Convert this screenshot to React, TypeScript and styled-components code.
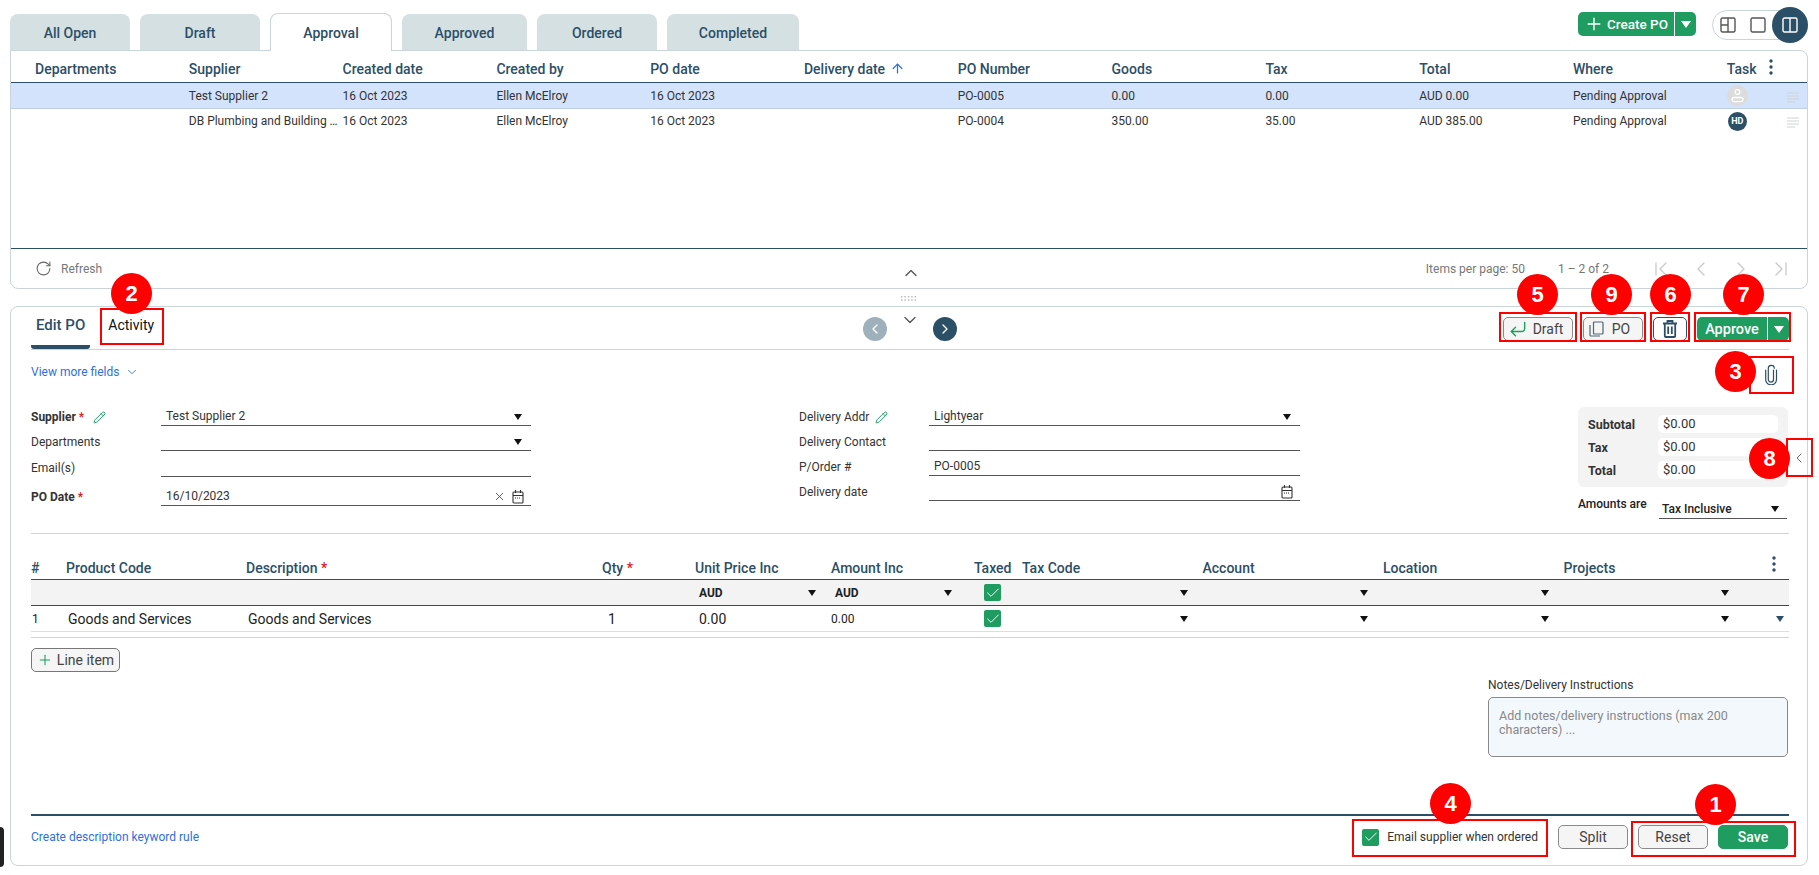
import React from 'react';
import styled, { createGlobalStyle } from 'styled-components';
import {
  ArrowUp, ChevronDown, ChevronFirst, ChevronLast, ChevronLeft, ChevronRight, ChevronUp,
  Check, CornerDownLeft, Pencil, Plus, RotateCw, X,
} from 'lucide-react';

const NAVY = '#2c4f68';
const GREEN = '#1f9c60';
const LINE = '#c9d5da';
const BLUE = '#2f6fdd';

const GlobalStyle = createGlobalStyle`
  html, body { margin: 0; padding: 0; background: #fff; height: 100%; overflow: hidden; }
  body { font-family: Roboto, "Liberation Sans", sans-serif; font-size: 13px; color: #222; }
  * { box-sizing: border-box; }
`;

const Page = styled.div`
  position: relative;
  width: 1819px;
  height: 875px;
  padding: 0 11px 0 10px;
  overflow: hidden;
`;

/* top tabs */
const TopBar = styled.div`
  height: 50px;
  display: flex;
  justify-content: space-between;
`;
const Tabs = styled.div`
  display: flex;
  align-items: flex-end;
  gap: 10px;
`;
const Tab = styled.div<{ $active?: boolean; $w: number }>`
  width: ${p => p.$w}px;
  height: ${p => (p.$active ? 38 : 36)}px;
  padding-top: ${p => (p.$active ? 0 : 2)}px;
  display: flex;
  align-items: center;
  justify-content: center;
  border-radius: 8px 8px 0 0;
  font-size: 14px;
  font-weight: 500;
  color: ${NAVY};
  background: ${p => (p.$active ? '#fff' : '#d5e0e2')};
  border: ${p => (p.$active ? `1px solid ${LINE}` : 'none')};
  border-bottom: none;
  position: relative;
  z-index: 1;
  margin-bottom: ${p => (p.$active ? -1 : 0)}px;
`;
const TopRight = styled.div`
  display: flex;
  align-items: flex-start;
  gap: 16px;
`;
const SplitButton = styled.div<{ $w: number }>`
  width: ${p => p.$w}px;
  height: 24px;
  display: flex;
  background: ${GREEN};
  border-radius: 5px;
  color: #fff;
  font-size: 14px;
  font-weight: 500;
`;
const SplitMain = styled.div`
  flex: 1;
  display: flex;
  align-items: center;
  justify-content: center;
  gap: 3px;
`;
const SplitArrow = styled.div`
  width: 22px;
  display: flex;
  align-items: center;
  justify-content: center;
  border-left: 1px solid #fff;
`;
const CreateWrap = styled.div`
  margin-top: 12px;
`;
const CreateLabel = styled.span`
  font-size: 13.5px;
`;
const ApproveLabel = styled.span`
  font-size: 14.5px;
`;
const LayoutToggle = styled.div`
  width: 96px;
  height: 30px;
  margin-top: 10px;
  border: 1px solid ${LINE};
  border-radius: 15px;
  display: flex;
  align-items: center;
  padding-left: 7px;
  gap: 14px;
  svg { flex: none; }
`;
const ToggleOn = styled.div`
  flex: none;
  width: 36px;
  height: 36px;
  margin-left: -8px;
  margin-top: -1px;
  border-radius: 50%;
  background: ${NAVY};
  display: flex;
  align-items: center;
  justify-content: center;
`;

/* purchase order list */
const ListCard = styled.div`
  height: 239px;
  border: 1px solid ${LINE};
  border-radius: 0 8px 8px 8px;
  display: flex;
  flex-direction: column;
`;
const ListHead = styled.div`
  display: grid;
  grid-template-columns: repeat(11, 153.8px) 1fr;
  padding: 4px 0 0 24px;
  height: 32px;
  align-items: center;
  font-size: 14px;
  font-weight: 500;
  color: ${NAVY};
  border-bottom: 1px solid ${NAVY};
`;
const ListRow = styled.div<{ $selected?: boolean }>`
  display: grid;
  grid-template-columns: repeat(11, 153.8px) 1fr;
  padding-left: 24px;
  height: ${p => (p.$selected ? 26 : 25)}px;
  align-items: center;
  font-size: 12px;
  color: #333;
  background: ${p => (p.$selected ? '#d4e3fc' : 'transparent')};
  border-bottom: 1px solid ${p => (p.$selected ? '#bdcfe0' : 'transparent')};
`;
const Cell = styled.div`
  white-space: nowrap;
  display: flex;
  align-items: center;
`;
const SortArrow = styled.span`
  display: inline-flex;
  color: ${BLUE};
  margin-left: 5px;
`;
const TaskHead = styled.div`
  display: flex;
  align-items: center;
  gap: 12px;
`;
const TaskDots = styled.span`
  display: flex;
  margin-top: -4px;
`;
const TaskCell = styled.div`
  display: flex;
  align-items: center;
  justify-content: space-between;
  padding-right: 8px;
`;
const LinesWrap = styled.div`
  display: flex;
  margin-top: 3px;
`;
const Avatar = styled.div<{ $dark?: boolean }>`
  width: ${p => (p.$dark ? 19 : 21)}px;
  height: ${p => (p.$dark ? 19 : 21)}px;
  border-radius: 50%;
  margin-left: ${p => (p.$dark ? 1 : 0)}px;
  background: ${p => (p.$dark ? NAVY : '#dcdcdc')};
  color: #fff;
  font-size: 9px;
  font-weight: 700;
  display: flex;
  align-items: center;
  justify-content: center;
`;
const ListSpacer = styled.div`
  flex: 1;
`;
const ListFooter = styled.div`
  height: 40px;
  border-top: 1px solid ${NAVY};
  display: grid;
  grid-template-columns: 1fr auto 1fr;
  align-items: center;
  padding: 0 14px 0 24px;
  color: #777;
  font-size: 12px;
`;
const RefreshWrap = styled.div`
  display: flex;
  align-items: center;
  gap: 9px;
`;
const CollapseUp = styled.div`
  display: flex;
  color: #555;
  margin: 9px 0 0 -6px;
`;
const Pager = styled.div`
  display: flex;
  align-items: center;
  justify-content: flex-end;
`;
const PagerText = styled.span<{ $ml: number }>`
  margin-left: ${p => p.$ml}px;
`;
const PagerIcons = styled.div`
  display: flex;
  gap: 16px;
  margin-left: 40px;
  color: #c9c9c9;
`;
const Handle = styled.div`
  height: 17px;
  display: flex;
  align-items: center;
  justify-content: center;
  padding-top: 1px;
`;

/* edit panel */
const EditCard = styled.div`
  position: relative;
  height: 560px;
  border: 1px solid ${LINE};
  border-radius: 8px;
  padding: 0 18px 0 20px;
`;
const EditHead = styled.div`
  height: 43px;
  display: grid;
  grid-template-columns: 1fr auto 1fr;
  align-items: center;
  border-bottom: 1px solid ${LINE};
`;
const EditTabs = styled.div`
  display: flex;
  align-self: stretch;
  gap: 13px;
`;
const EditTab = styled.div<{ $active?: boolean }>`
  padding: 0 5px ${p => (p.$active ? 2 : 6)}px;
  height: 42px;
  display: flex;
  align-items: center;
  font-size: ${p => (p.$active ? 15 : 14)}px;
  font-weight: ${p => (p.$active ? 500 : 400)};
  color: ${p => (p.$active ? NAVY : '#111')};
  border-bottom: ${p => (p.$active ? `4px solid ${NAVY}` : 'none')};
  border-radius: 0 0 3px 3px;
`;
const RecordNav = styled.div`
  display: flex;
  align-items: center;
  gap: 11px;
  padding-top: 2px;
`;
const RoundNav = styled.div<{ $off?: boolean }>`
  width: 24px;
  height: 24px;
  border-radius: 50%;
  background: ${p => (p.$off ? '#9fb0bd' : NAVY)};
  color: #fff;
  display: flex;
  align-items: center;
  justify-content: center;
`;
const CollapseDown = styled.div`
  width: 24px;
  display: flex;
  justify-content: center;
  color: #555;
  margin-top: -18px;
`;
const Actions = styled.div`
  display: flex;
  justify-content: flex-end;
  align-items: center;
  gap: 10px;
  padding-top: 2px;
`;
const Btn = styled.div<{ $w: number; $gap?: number; $pr?: number; $dark?: boolean }>`
  width: ${p => p.$w}px;
  height: 24px;
  padding-right: ${p => p.$pr || 0}px;
  border: 1px solid ${p => (p.$dark ? NAVY : '#8a8a8a')};
  border-radius: 5px;
  background: ${p => (p.$dark ? '#fff' : '#f5f5f5')};
  color: #444;
  font-size: 14px;
  display: flex;
  align-items: center;
  justify-content: center;
  gap: ${p => p.$gap || 0}px;
`;
const MoreRow = styled.div`
  height: 51px;
  display: flex;
  justify-content: space-between;
  align-items: flex-start;
  padding-top: 13px;
`;
const LinkText = styled.a`
  color: ${BLUE};
  font-size: 12px;
  line-height: 18px;
  display: inline-flex;
  align-items: center;
  gap: 6px;
`;
const ClipWrap = styled.div`
  margin: 1px 11px 0 0;
`;

const FormGrid = styled.div`
  height: 133px;
  display: grid;
  grid-template-columns: 768px 779px 1fr;
  border-bottom: 1px solid ${LINE};
`;
const FieldCol = styled.div`
  width: 100%;
`;
const FieldRow = styled.div<{ $mt?: number; $wide?: boolean }>`
  display: grid;
  grid-template-columns: ${p => (p.$wide ? '130px 371px' : '130px 370px')};
  height: 25px;
  margin-top: ${p => p.$mt || 0}px;
  align-items: end;
`;
const Label = styled.div<{ $bold?: boolean }>`
  font-size: 12px;
  line-height: 18px;
  font-weight: ${p => (p.$bold ? 700 : 400)};
  color: #333;
  display: flex;
  align-items: center;
  gap: 3px;
`;
const Req = styled.span`
  color: #e5131d;
  font-weight: 500;
`;
const InputLine = styled.div`
  height: 25px;
  padding: 7px 9px 0 5px;
  line-height: 17px;
  border-bottom: 1px solid #555;
  font-size: 12px;
  color: #333;
  display: flex;
  align-items: center;
  justify-content: space-between;
`;
const InputIcons = styled.div`
  display: flex;
  align-items: center;
  gap: 6px;
  margin-right: -2px;
`;
const Caret = styled.span<{ $color?: string; $big?: boolean }>`
  display: inline-block;
  width: 0;
  height: 0;
  flex: none;
  border-left: ${p => (p.$big ? 5.5 : 4.5)}px solid transparent;
  border-right: ${p => (p.$big ? 5.5 : 4.5)}px solid transparent;
  border-top: ${p => (p.$big ? 7 : 6)}px solid ${p => p.$color || '#111'};
`;
const SummaryCol = styled.div`
  padding-top: 6px;
`;
const SummaryBox = styled.div`
  height: 80px;
  margin-right: 1px;
  padding: 8px 10px;
  background: #f3f3f3;
  border-radius: 6px;
  display: flex;
  flex-direction: column;
  gap: 5px;
`;
const SummaryRow = styled.div`
  display: grid;
  grid-template-columns: 70px 1fr;
  align-items: center;
  font-size: 12.5px;
  font-weight: 700;
  color: #333;
`;
const SummaryValue = styled.div`
  height: 18px;
  background: #fff;
  border-radius: 5px;
  padding-left: 5px;
  line-height: 17px;
  font-weight: 400;
  font-size: 13px;
`;
const AmountsRow = styled.div`
  display: grid;
  grid-template-columns: 81px 1fr;
  margin: 7px 2px 0 0;
  align-items: center;
`;
const AmountsLabel = styled.div`
  font-size: 12px;
  font-weight: 500;
  color: #222;
  margin-top: -6px;
`;
const AmountsSelect = styled.div`
  height: 25px;
  padding: 6px 8px 0 3px;
  border-bottom: 1px solid #555;
  display: flex;
  align-items: center;
  justify-content: space-between;
  font-size: 12px;
  font-weight: 500;
`;

/* line items */
const lineCols = '35px 180px 356px 93px 136px 143px 48px 180.5px 180.5px 180.5px 180.5px 1fr';
const LineHead = styled.div`
  display: grid;
  grid-template-columns: ${lineCols};
  height: 46px;
  align-items: end;
  padding-bottom: 2px;
  border-bottom: 1px solid ${NAVY};
  font-size: 14px;
  font-weight: 500;
  color: ${NAVY};
  line-height: 18px;
`;
const LineRow = styled.div<{ $filter?: boolean }>`
  display: grid;
  grid-template-columns: ${lineCols};
  height: 26px;
  align-items: center;
  background: ${p => (p.$filter ? '#f3f3f3' : 'transparent')};
  border-bottom: 1px solid ${p => (p.$filter ? NAVY : '#d9dfe2')};
  font-size: 14px;
  color: #222;
`;
const LineEnd = styled.div`
  height: 6px;
  border-bottom: 1px solid ${LINE};
`;
const SelectCell = styled.div<{ $pr?: number; $pl?: number }>`
  display: flex;
  align-items: center;
  justify-content: space-between;
  padding-left: ${p => p.$pl || 0}px;
  padding-right: ${p => p.$pr ?? 15}px;
`;
const CaretOnly = styled(SelectCell)`
  justify-content: flex-end;
`;
const AudText = styled.span`
  font-size: 12px;
  font-weight: 700;
`;
const TextCell = styled.div<{ $pl?: number; $small?: boolean }>`
  padding-left: ${p => p.$pl || 0}px;
  font-size: ${p => (p.$small ? 12 : 14)}px;
`;
const HeadMore = styled.div`
  display: flex;
  justify-content: flex-end;
  padding: 0 12px 5px 0;
`;
const EndCaret = styled.div`
  display: flex;
  justify-content: flex-end;
  padding-right: 5px;
`;
const GreenBox = styled.span<{ $ml?: number }>`
  width: 17px;
  height: 17px;
  margin-left: ${p => p.$ml || 0}px;
  background: ${GREEN};
  border-radius: 2px;
  color: #fff;
  display: inline-flex;
  align-items: center;
  justify-content: center;
`;
const LowerArea = styled.div`
  height: 176px;
  display: flex;
  justify-content: space-between;
  align-items: flex-start;
  padding: 10px 1px 0 0;
`;
const OutlineBtn = styled.div`
  height: 24px;
  width: 89px;
  border: 1px solid #777;
  border-radius: 5px;
  background: #f5f5f5;
  display: flex;
  align-items: center;
  justify-content: center;
  gap: 4px;
  font-size: 14px;
  color: #444;
`;
const Notes = styled.div`
  width: 300px;
  margin-top: 30px;
`;
const NotesLabel = styled.div`
  font-size: 12px;
  color: #333;
  line-height: 14px;
  margin-bottom: 5px;
`;
const NotesBox = styled.div`
  height: 60px;
  border: 1px solid #888;
  border-radius: 5px;
  background: #f3f8fc;
  padding: 11px 10px;
  font-size: 12.5px;
  line-height: 14px;
  color: #888;
`;
const BottomBar = styled.div`
  height: 44px;
  border-top: 2px solid ${NAVY};
  display: flex;
  align-items: center;
  justify-content: space-between;
  padding-right: 1px;
`;
const BottomRight = styled.div`
  display: flex;
  align-items: center;
`;
const EmailCheck = styled.label`
  display: flex;
  align-items: center;
  gap: 8px;
  font-size: 12px;
  color: #333;
  margin-right: 20px;
`;
const FootBtn = styled.div<{ $green?: boolean }>`
  width: 70px;
  height: 24px;
  margin-left: ${p => (p.$green ? 10 : 0)}px;
  border: 1px solid ${p => (p.$green ? GREEN : '#8a8a8a')};
  border-radius: 5px;
  background: ${p => (p.$green ? GREEN : '#f5f5f5')};
  color: ${p => (p.$green ? '#fff' : '#444')};
  font-size: 14px;
  font-weight: ${p => (p.$green ? 500 : 400)};
  display: flex;
  align-items: center;
  justify-content: center;
`;
const FootGap = styled.div`
  width: 10px;
`;
const PanelToggle = styled.div`
  position: absolute;
  right: 0;
  top: 143px;
  color: #666;
`;
const DockTab = styled.div`
  position: absolute;
  left: 0;
  top: 827px;
  width: 4px;
  height: 40px;
  background: #222;
  border-radius: 0 6px 6px 0;
`;

/* red callouts drawn on top of the screenshot */
const MarkBox = styled.div<{ $x: number; $y: number; $w: number; $h: number }>`
  position: absolute;
  left: ${p => p.$x}px;
  top: ${p => p.$y}px;
  width: ${p => p.$w}px;
  height: ${p => p.$h}px;
  border: 2px solid #f00;
  z-index: 5;
`;
const MarkBadge = styled.div<{ $x: number; $y: number }>`
  position: absolute;
  left: ${p => p.$x - 20}px;
  top: ${p => p.$y - 20}px;
  width: 41px;
  height: 41px;
  border-radius: 50%;
  background: #f00;
  color: #fff;
  font: 700 22px "Liberation Sans", Arial, sans-serif;
  display: flex;
  align-items: center;
  justify-content: center;
  z-index: 6;
`;

const boxes = [
  { x: 100, y: 308, w: 64, h: 37 },
  { x: 1499, y: 312, w: 78, h: 30 },
  { x: 1580, y: 312, w: 66, h: 30 },
  { x: 1650, y: 312, w: 40, h: 30 },
  { x: 1694, y: 312, w: 97, h: 30 },
  { x: 1749, y: 356, w: 45, h: 38 },
  { x: 1786, y: 438, w: 27, h: 39 },
  { x: 1352, y: 819, w: 196, h: 38 },
  { x: 1631, y: 821, w: 165, h: 36 },
];
const badges = [
  { n: 1, x: 1715, y: 804 },
  { n: 2, x: 131, y: 293 },
  { n: 3, x: 1735, y: 371 },
  { n: 4, x: 1450, y: 803 },
  { n: 5, x: 1537, y: 294 },
  { n: 6, x: 1670, y: 294 },
  { n: 7, x: 1743, y: 294 },
  { n: 8, x: 1769, y: 458 },
  { n: 9, x: 1611, y: 294 },
];

const listHead = ['Departments', 'Supplier', 'Created date', 'Created by', 'PO date', 'Delivery date', 'PO Number', 'Goods', 'Tax', 'Total', 'Where'];
const listRows = [
  { supplier: 'Test Supplier 2', po: 'PO-0005', goods: '0.00', tax: '0.00', total: 'AUD 0.00', selected: true },
  { supplier: 'DB Plumbing and Building …', po: 'PO-0004', goods: '350.00', tax: '35.00', total: 'AUD 385.00', selected: false },
];

const Dots = () => (
  <svg width="6" height="16" viewBox="0 0 6 16">
    <circle cx="3" cy="2" r="1.7" fill={NAVY} />
    <circle cx="3" cy="8" r="1.7" fill={NAVY} />
    <circle cx="3" cy="14" r="1.7" fill={NAVY} />
  </svg>
);
const RowLines = () => (
  <svg width="12" height="11" viewBox="0 0 12 11" stroke="#cfd3d6" strokeWidth="1">
    <path d="M0 1h12M0 4h12M0 7h12M0 10h8" />
  </svg>
);
const Calendar = () => (
  <svg width="12" height="15" viewBox="0 0 12 15" fill="none" stroke="#333" strokeWidth="1.1">
    <rect x="1" y="3" width="10" height="11" rx="1" />
    <path d="M1 6.5h10M3.5 1v3M8.5 1v3" />
    <path d="M3 9h6" strokeDasharray="1 1" />
  </svg>
);
const Person = () => (
  <svg width="13" height="15" viewBox="0 0 13 15" fill="none" stroke="#fff" strokeWidth="1.3">
    <circle cx="6.5" cy="4" r="2.4" />
    <rect x="1" y="9.5" width="11" height="4.2" rx="2.1" />
  </svg>
);
const Clip = () => (
  <svg width="14" height="21" viewBox="0 0 14 21" fill="none" stroke={NAVY} strokeWidth="1.2" strokeLinecap="round">
    <path d="M9.5 6v9.5a2.6 2.6 0 0 1-5.2 0V4.5a3 3 0 0 1 6-.3M12.5 6v9.5a5.4 5.4 0 0 1-10.8 0V6" />
  </svg>
);
const CopyIcon = () => (
  <svg width="15" height="16" viewBox="0 0 15 16" fill="none" stroke="#4f6474" strokeWidth="1.2">
    <rect x="4.5" y="1" width="9.5" height="12" rx="1" />
    <path d="M1 4v10.2a.8.8 0 0 0 .8.8H11" />
  </svg>
);
const TrashIcon = () => (
  <svg width="16" height="18" viewBox="0 0 16 18" fill="none" stroke={NAVY} strokeWidth="1.8">
    <path d="M1 3.5h14M5.5 3V1h5v2M2.8 3.5V16a1 1 0 0 0 1 1h8.4a1 1 0 0 0 1-1V3.5M6.2 6.5V14M9.8 6.5V14" />
  </svg>
);
const PaneIcon = ({ kind, color }: { kind: 'quad' | 'single' | 'split'; color: string }) => (
  <svg width="16" height="16" viewBox="0 0 16 16" fill="none" stroke={color} strokeWidth="1.4">
    <rect x="1" y="1" width="14" height="14" rx="1.5" />
    {kind === 'quad' && <path d="M8 1v14M1 8h7" />}
    {kind === 'split' && <path d="M8 1v14" />}
  </svg>
);
const Grip = () => (
  <svg width="16" height="5" viewBox="0 0 16 5" fill="#b4bcc2">
    {[0, 1, 2, 3, 4].map(i => (
      <React.Fragment key={i}>
        <rect x={i * 3.4} y="0" width="1.5" height="1.5" />
        <rect x={i * 3.4} y="3.2" width="1.5" height="1.5" />
      </React.Fragment>
    ))}
  </svg>
);
const Tick = () => <Check size={16} strokeWidth={1.4} />;
const GreenPencil = () => <Pencil size={13} strokeWidth={1.8} color={GREEN} />;

const App: React.FC = () => {
  return (
    <Page>
      <GlobalStyle />
      <TopBar>
        <Tabs>
          <Tab $w={120}>All Open</Tab>
          <Tab $w={120}>Draft</Tab>
          <Tab $w={122} $active>Approval</Tab>
          <Tab $w={125}>Approved</Tab>
          <Tab $w={120}>Ordered</Tab>
          <Tab $w={132}>Completed</Tab>
        </Tabs>
        <TopRight>
          <CreateWrap>
            <SplitButton $w={118}>
              <SplitMain><Plus size={20} strokeWidth={1.7} /><CreateLabel>Create PO</CreateLabel></SplitMain>
              <SplitArrow><Caret $color="#fff" $big /></SplitArrow>
            </SplitButton>
          </CreateWrap>
          <LayoutToggle>
            <PaneIcon kind="quad" color="#555" />
            <PaneIcon kind="single" color="#555" />
            <ToggleOn><PaneIcon kind="split" color="#fff" /></ToggleOn>
          </LayoutToggle>
        </TopRight>
      </TopBar>

      <ListCard>
        <ListHead>
          {listHead.map(h => (
            <Cell key={h}>
              {h}
              {h === 'Delivery date' && <SortArrow><ArrowUp size={15} strokeWidth={2} /></SortArrow>}
            </Cell>
          ))}
          <TaskHead><span>Task</span><TaskDots><Dots /></TaskDots></TaskHead>
        </ListHead>
        {listRows.map((r, i) => (
          <ListRow key={r.po} $selected={r.selected}>
            <Cell />
            <Cell>{r.supplier}</Cell>
            <Cell>16 Oct 2023</Cell>
            <Cell>Ellen McElroy</Cell>
            <Cell>16 Oct 2023</Cell>
            <Cell />
            <Cell>{r.po}</Cell>
            <Cell>{r.goods}</Cell>
            <Cell>{r.tax}</Cell>
            <Cell>{r.total}</Cell>
            <Cell>Pending Approval</Cell>
            <TaskCell>
              {i === 0 ? <Avatar><Person /></Avatar> : <Avatar $dark>HD</Avatar>}
              <LinesWrap><RowLines /></LinesWrap>
            </TaskCell>
          </ListRow>
        ))}
        <ListSpacer />
        <ListFooter>
          <RefreshWrap>
            <RotateCw size={17} strokeWidth={1.5} color="#666" />
            Refresh
          </RefreshWrap>
          <CollapseUp><ChevronUp size={20} strokeWidth={1.6} /></CollapseUp>
          <Pager>
            <PagerText $ml={0}>Items per page: 50</PagerText>
            <PagerText $ml={33}>1 – 2 of 2</PagerText>
            <PagerIcons>
              <ChevronFirst size={24} strokeWidth={1.3} />
              <ChevronLeft size={24} strokeWidth={1.3} />
              <ChevronRight size={24} strokeWidth={1.3} />
              <ChevronLast size={24} strokeWidth={1.3} />
            </PagerIcons>
          </Pager>
        </ListFooter>
      </ListCard>

      <Handle><Grip /></Handle>

      <EditCard>
        <EditHead>
          <EditTabs>
            <EditTab $active>Edit PO</EditTab>
            <EditTab>Activity</EditTab>
          </EditTabs>
          <RecordNav>
            <RoundNav $off><ChevronLeft size={16} strokeWidth={2} /></RoundNav>
            <CollapseDown><ChevronDown size={20} strokeWidth={1.6} /></CollapseDown>
            <RoundNav><ChevronRight size={16} strokeWidth={2} /></RoundNav>
          </RecordNav>
          <Actions>
            <Btn $w={70} $gap={5} $pr={5}><CornerDownLeft size={20} strokeWidth={1.7} color={GREEN} />Draft</Btn>
            <Btn $w={60} $gap={8} $pr={7}><CopyIcon />PO</Btn>
            <Btn $w={34} $dark><TrashIcon /></Btn>
            <SplitButton $w={92}>
              <SplitMain><ApproveLabel>Approve</ApproveLabel></SplitMain>
              <SplitArrow><Caret $color="#fff" $big /></SplitArrow>
            </SplitButton>
          </Actions>
        </EditHead>

        <MoreRow>
          <LinkText>View more fields <ChevronDown size={14} strokeWidth={1.5} /></LinkText>
          <ClipWrap><Clip /></ClipWrap>
        </MoreRow>

        <FormGrid>
          <FieldCol>
            <FieldRow>
              <Label $bold>Supplier <Req>*</Req>&nbsp;<GreenPencil /></Label>
              <InputLine>Test Supplier 2<Caret /></InputLine>
            </FieldRow>
            <FieldRow>
              <Label>Departments</Label>
              <InputLine><span /><Caret /></InputLine>
            </FieldRow>
            <FieldRow $mt={1}>
              <Label>Email(s)</Label>
              <InputLine />
            </FieldRow>
            <FieldRow $mt={4}>
              <Label $bold>PO Date <Req>*</Req></Label>
              <InputLine>16/10/2023<InputIcons><X size={13} strokeWidth={1.4} /><Calendar /></InputIcons></InputLine>
            </FieldRow>
          </FieldCol>
          <FieldCol>
            <FieldRow $wide>
              <Label>Delivery Addr&nbsp;<GreenPencil /></Label>
              <InputLine>Lightyear<Caret /></InputLine>
            </FieldRow>
            <FieldRow $wide>
              <Label>Delivery Contact</Label>
              <InputLine />
            </FieldRow>
            <FieldRow $wide>
              <Label>P/Order #</Label>
              <InputLine>PO-0005</InputLine>
            </FieldRow>
            <FieldRow $wide>
              <Label>Delivery date</Label>
              <InputLine><span /><InputIcons><Calendar /></InputIcons></InputLine>
            </FieldRow>
          </FieldCol>
          <SummaryCol>
            <SummaryBox>
              <SummaryRow>Subtotal<SummaryValue>$0.00</SummaryValue></SummaryRow>
              <SummaryRow>Tax<SummaryValue>$0.00</SummaryValue></SummaryRow>
              <SummaryRow>Total<SummaryValue>$0.00</SummaryValue></SummaryRow>
            </SummaryBox>
            <AmountsRow>
              <AmountsLabel>Amounts are</AmountsLabel>
              <AmountsSelect>Tax Inclusive<Caret /></AmountsSelect>
            </AmountsRow>
          </SummaryCol>
        </FormGrid>

        <LineHead>
          <span>#</span>
          <span>Product Code</span>
          <span>Description <Req>*</Req></span>
          <span>Qty <Req>*</Req></span>
          <span>Unit Price Inc</span>
          <span>Amount Inc</span>
          <span>Taxed</span>
          <span>Tax Code</span>
          <span>Account</span>
          <span>Location</span>
          <span>Projects</span>
          <HeadMore><Dots /></HeadMore>
        </LineHead>
        <LineRow $filter>
          <span /><span /><span /><span />
          <SelectCell $pl={4}><AudText>AUD</AudText><Caret /></SelectCell>
          <SelectCell $pl={4} $pr={22}><AudText>AUD</AudText><Caret /></SelectCell>
          <GreenBox $ml={10}><Tick /></GreenBox>
          <CaretOnly><Caret /></CaretOnly>
          <CaretOnly><Caret /></CaretOnly>
          <CaretOnly><Caret /></CaretOnly>
          <CaretOnly><Caret /></CaretOnly>
          <span />
        </LineRow>
        <LineRow>
          <TextCell $pl={1} $small>1</TextCell>
          <TextCell $pl={2}>Goods and Services</TextCell>
          <TextCell $pl={2}>Goods and Services</TextCell>
          <TextCell $pl={6}>1</TextCell>
          <TextCell $pl={4}>0.00</TextCell>
          <TextCell $small>0.00</TextCell>
          <GreenBox $ml={10}><Tick /></GreenBox>
          <CaretOnly><Caret /></CaretOnly>
          <CaretOnly><Caret /></CaretOnly>
          <CaretOnly><Caret /></CaretOnly>
          <CaretOnly><Caret /></CaretOnly>
          <EndCaret><Caret $color={NAVY} /></EndCaret>
        </LineRow>
        <LineEnd />

        <LowerArea>
          <OutlineBtn><Plus size={16} strokeWidth={1.6} color={GREEN} />Line item</OutlineBtn>
          <Notes>
            <NotesLabel>Notes/Delivery Instructions</NotesLabel>
            <NotesBox>Add notes/delivery instructions (max 200 characters) ...</NotesBox>
          </Notes>
        </LowerArea>

        <BottomBar>
          <LinkText>Create description keyword rule</LinkText>
          <BottomRight>
            <EmailCheck><GreenBox><Tick /></GreenBox>Email supplier when ordered</EmailCheck>
            <FootBtn>Split</FootBtn>
            <FootGap />
            <FootBtn>Reset</FootBtn>
            <FootBtn $green>Save</FootBtn>
          </BottomRight>
        </BottomBar>

        <PanelToggle><ChevronLeft size={16} strokeWidth={1.5} /></PanelToggle>
      </EditCard>

      <DockTab />
      {boxes.map(b => (
        <MarkBox key={`${b.x}-${b.y}`} $x={b.x} $y={b.y} $w={b.w} $h={b.h} />
      ))}
      {badges.map(b => (
        <MarkBadge key={b.n} $x={b.x} $y={b.y}>{b.n}</MarkBadge>
      ))}
    </Page>
  );
};

export default App;
